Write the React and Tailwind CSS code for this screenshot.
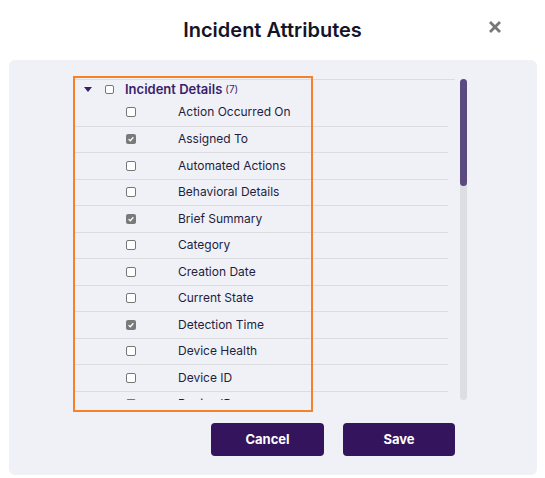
import React from 'react';

const rows = [
  { label: 'Action Occurred On', checked: false },
  { label: 'Assigned To', checked: true },
  { label: 'Automated Actions', checked: false },
  { label: 'Behavioral Details', checked: false },
  { label: 'Brief Summary', checked: true },
  { label: 'Category', checked: false },
  { label: 'Creation Date', checked: false },
  { label: 'Current State', checked: false },
  { label: 'Detection Time', checked: true },
  { label: 'Device Health', checked: false },
  { label: 'Device ID', checked: false },
  { label: 'Device IP', checked: false },
];

const Box = ({ checked, size = 'w-[10px] h-[10px]' }) =>
  checked ? (
    <span className={`${size} rounded-[2px] bg-[#7a7a7a] flex items-center justify-center`}>
      <svg viewBox="0 0 10 10" className="w-[8px] h-[8px]">
        <path d="M2 5.2 L4.1 7.2 L8 2.8" fill="none" stroke="white" strokeWidth="1.6" />
      </svg>
    </span>
  ) : (
    <span className={`${size} rounded-[2px] bg-white border border-[#767676]`} />
  );

export default function App() {
  return (
    <div className="w-[545px] h-[478px] bg-white font-['Inter',sans-serif] text-[#1e1e3e] overflow-hidden">
      {/* Header */}
      <div className="relative h-[60px] flex items-center justify-center">
        <h2 className="text-[20px] font-semibold text-[#141428]">Incident Attributes</h2>
        <svg viewBox="0 0 12 12" className="absolute right-[44px] top-[21px] w-[12px] h-[12px]">
          <path d="M2 2 L10 10 M10 2 L2 10" stroke="#777" strokeWidth="2.8" strokeLinecap="square" />
        </svg>
      </div>

      {/* Panel */}
      <div className="relative ml-[9px] w-[528px] h-[415px] bg-[#f0f1f7] rounded-md pt-[19px] pl-[66px]">
        <div className="flex">
          <div className="w-[380px] h-[321px] overflow-hidden">
            <div className="h-[20px] border-t border-[#dcdce0] flex items-center">
              <svg viewBox="0 0 8 6" className="ml-[9px] w-[8px] h-[6px]">
                <path d="M0 0 H8 L4 5 Z" fill="#3b1e6b" />
              </svg>
              <span className="ml-[13px]">
                <Box size="w-[9px] h-[9px] block" />
              </span>
              <span className="ml-[11px] text-[13px] font-semibold text-[#3b1e6b]">Incident Details</span>
              <span className="ml-[3px] text-[10px] text-[#3b1e6b]">(7)</span>
            </div>
            {rows.map((r, i) => (
              <div
                key={r.label}
                className={`w-[373px] h-[26.5px] flex items-center ${i > 0 ? 'border-t border-[#dcdce0]' : ''}`}
              >
                <span className="ml-[51px] w-[52px] flex">
                  <Box checked={r.checked} />
                </span>
                <span className="text-[12px]">{r.label}</span>
              </div>
            ))}
          </div>
          {/* scrollbar */}
          <div className="ml-[5px] w-[7px] h-[321px] rounded-full bg-[#dedee2] flex flex-col">
            <div className="h-[107px] rounded-full bg-[#5b4a80]" />
          </div>
        </div>

        <div className="w-[380px] mt-[23px] flex justify-end gap-[19px]">
          <button className="w-[113px] h-[33px] rounded-[4px] bg-[#33145d] text-white text-[13px] font-bold">Cancel</button>
          <button className="w-[112px] h-[33px] rounded-[4px] bg-[#33145d] text-white text-[13px] font-bold">Save</button>
        </div>

        {/* highlight */}
        <div className="absolute left-[64px] top-[16px] w-[240px] h-[336px] border-2 border-[#f5822a] pointer-events-none" />
      </div>
    </div>
  );
}
